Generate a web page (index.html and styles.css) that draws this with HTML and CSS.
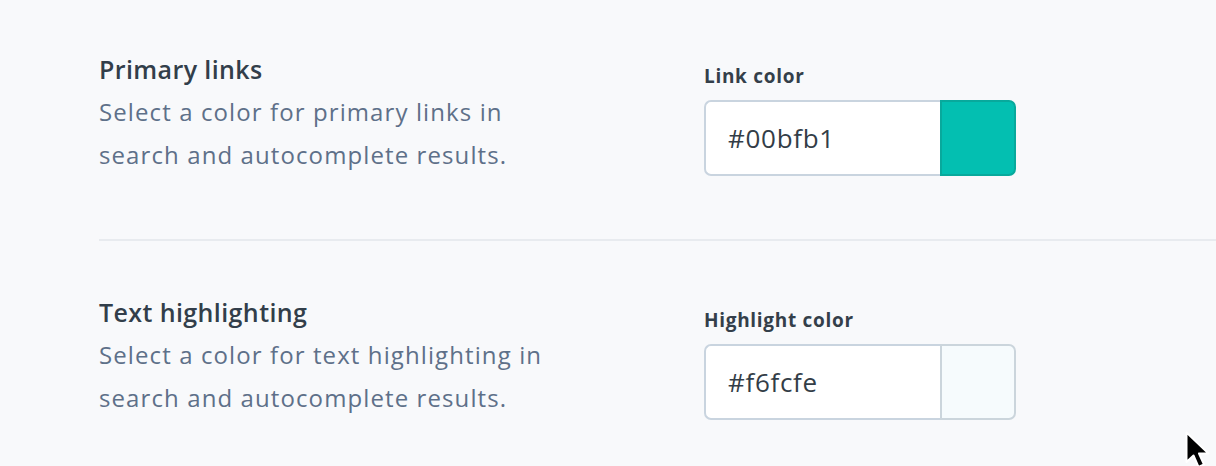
FILE: index.html
```html
<!DOCTYPE html>
<html lang="en">
<head>
    <meta charset="UTF-8">
    <title>Search appearance</title>
    <link rel="stylesheet" href="styles.css">
</head>
<body>

    <div class="settings">
        <div class="setting-row">
            <div class="setting-info">
                <h3>Primary links</h3>
                <p>Select a color for primary links in search and autocomplete results.</p>
            </div>
            <div class="setting-field">
                <label for="link-color">Link color</label>
                <div class="color-input">
                    <input type="text" id="link-color" value="#00bfb1">
                    <span class="swatch swatch-link"></span>
                </div>
            </div>
        </div>

        <div class="setting-row">
            <div class="setting-info">
                <h3>Text highlighting</h3>
                <p>Select a color for text highlighting in search and autocomplete results.</p>
            </div>
            <div class="setting-field">
                <label for="highlight-color">Highlight color</label>
                <div class="color-input">
                    <input type="text" id="highlight-color" value="#f6fcfe">
                    <span class="swatch swatch-highlight"></span>
                </div>
            </div>
        </div>
    </div>

    <!-- puntatore del mouse -->
    <svg class="cursor" width="34" height="40" viewBox="0 0 34 40">
        <path d="M1.5 1.5 L1.5 31 L8.5 24.5 L13.5 36 L19 33.5 L14 22.5 L23.5 22.5 Z" fill="#000" stroke="#fff" stroke-width="2" stroke-linejoin="round"/>
    </svg>

</body>
</html>
```

FILE: styles.css
```css
/* Stili base */
body {
    margin: 0;
    padding: 0;
    font-family: "Open Sans", "Noto Sans", sans-serif;
    background-color: #f8f9fb;
    overflow: hidden;
}

.settings {
    padding: 53px 0 0 99px;
}

/* Riga di impostazione: testo a sinistra, campo a destra */
.setting-row {
    display: grid;
    grid-template-columns: 605px 312px;
    padding-bottom: 63px;
    border-bottom: 2px solid #e8ebef;
}
.setting-row + .setting-row {
    padding-top: 55px;
    border-bottom: none;
}

.setting-info h3 {
    margin: 0;
    font-size: 25px;
    line-height: 32px;
    font-weight: 600;
    letter-spacing: 0.4px;
    color: #323e4a;
}
.setting-info p {
    margin: 5px 0 0;
    width: 470px;
    font-size: 24px;
    line-height: 43px;
    letter-spacing: 1.1px;
    color: #5e7089;
}

.setting-field {
    padding-top: 11px;
}
.setting-row + .setting-row .setting-field {
    padding-top: 12px;
}
.setting-field label {
    display: block;
    font-size: 19px;
    line-height: 24px;
    font-weight: 700;
    letter-spacing: 0.7px;
    color: #343f4a;
    margin-bottom: 12px;
}

/* Campo colore con anteprima */
.color-input {
    display: flex;
    height: 76px;
}
.color-input input {
    flex-grow: 1;
    min-width: 0;
    border: 2px solid #c9d4df;
    border-right: none;
    border-radius: 7px 0 0 7px;
    outline: none;
    padding: 0 0 0 22px;
    font-family: inherit;
    font-size: 26px;
    letter-spacing: 0.7px;
    color: #333d47;
    background-color: #fff;
}
.swatch {
    width: 76px;
    flex-shrink: 0;
    box-sizing: border-box;
    border: 2px solid #cbd5dc;
    border-radius: 0 7px 7px 0;
}
.swatch-link {
    background-color: #03bfb1;
    border-color: #08a99c;
}
.swatch-highlight {
    background-color: #f6fbfd;
}

.cursor {
    position: absolute;
    left: 1185px;
    top: 431px;
}
```
